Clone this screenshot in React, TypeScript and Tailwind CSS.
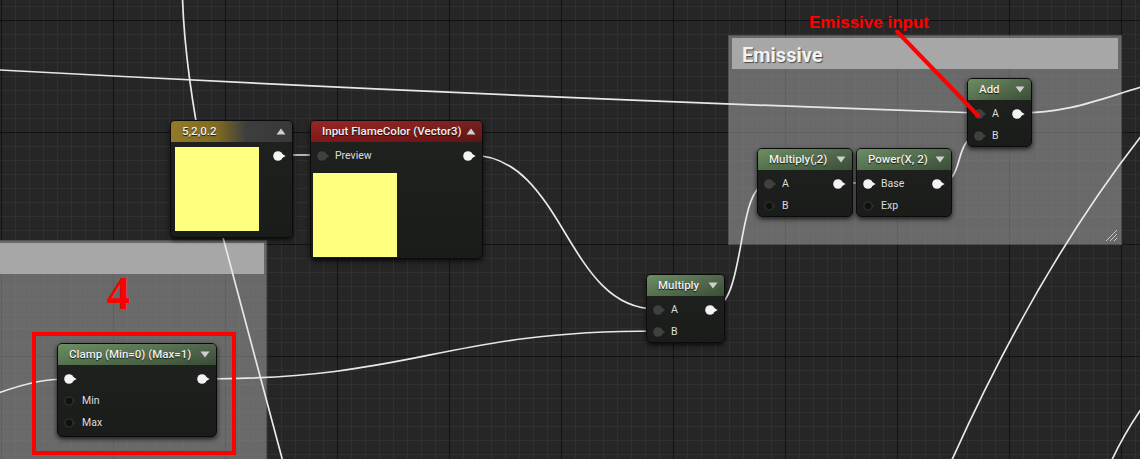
import React from 'react';

type PinKind = 'white' | 'gray' | 'hollow';

function Pin({ kind }: { kind: PinKind }) {
  if (kind === 'white') {
    return (
      <svg width="14" height="10" viewBox="0 0 14 10" className="block shrink-0">
        <circle cx="5" cy="5" r="4.8" fill="#f3f3f3" />
        <path d="M8 2.3 L12.6 5 L8 7.7 Z" fill="#f3f3f3" />
      </svg>
    );
  }
  if (kind === 'gray') {
    return (
      <svg width="14" height="10" viewBox="0 0 14 10" className="block shrink-0">
        <circle cx="5" cy="5" r="4.8" fill="#3f403f" />
        <path d="M8 2.3 L12.2 5 L8 7.7 Z" fill="#3f403f" />
      </svg>
    );
  }
  return (
    <svg width="14" height="10" viewBox="0 0 14 10" className="block shrink-0">
      <circle cx="5" cy="5" r="4.1" fill="#0f100f" stroke="#2e2f2e" strokeWidth="1.4" />
      <path d="M9 3.2 L11.8 5 L9 6.8 Z" fill="#2e2f2e" />
    </svg>
  );
}

function Tri({ up }: { up?: boolean }) {
  return (
    <svg width="10" height="7" viewBox="0 0 10 7" className="block shrink-0">
      {up ? <path d="M0.5 6.5 L5 0.5 L9.5 6.5 Z" fill="#cfcfcf" /> : <path d="M0.5 0.5 L9.5 0.5 L5 6.5 Z" fill="#cfcfcf" />}
    </svg>
  );
}

const GREEN =
  'bg-[linear-gradient(to_bottom,rgba(255,255,255,0.07),rgba(0,0,0,0.14)),linear-gradient(to_right,#628559,#4f6b49_65%,#445a40)]';
const GOLD = 'bg-[linear-gradient(to_right,#927a27,#806a23_38%,#3e3e3e_62%,#383838)]';
const RED = 'bg-[linear-gradient(to_bottom,rgba(255,255,255,0.05),rgba(0,0,0,0.12)),linear-gradient(to_right,#931b1b,#821818_60%,#6d1616)]';

function Node({
  className,
  title,
  header,
  up,
  children,
}: {
  className: string;
  title: string;
  header: string;
  up?: boolean;
  children?: React.ReactNode;
}) {
  return (
    <div
      className={`absolute flex flex-col overflow-hidden rounded-[5px] border border-[#0b0b0b] bg-[linear-gradient(to_bottom,#202220,#1a1c1a)] shadow-[0_2px_5px_rgba(0,0,0,0.75)] ${className}`}
    >
      <div className={`flex h-[21px] shrink-0 items-center justify-between pl-[11px] pr-[6px] ${header}`}>
        <span className="whitespace-nowrap font-['Roboto',sans-serif] text-[11.5px] font-medium leading-none text-[#f0f0f0] [text-shadow:0_1px_1px_rgba(0,0,0,0.8)]">
          {title}
        </span>
        <Tri up={up} />
      </div>
      {children}
    </div>
  );
}

function Row({ inKind, label, outKind }: { inKind?: PinKind; label?: string; outKind?: PinKind }) {
  return (
    <div className="flex h-[22px] items-center justify-between pl-[6px] pr-[5px]">
      <div className="flex items-center gap-[4px]">
        {inKind && <Pin kind={inKind} />}
        {label && (
          <span className="font-['Roboto',sans-serif] text-[10.5px] leading-none text-[#dcdcdc]">{label}</span>
        )}
      </div>
      {outKind && <Pin kind={outKind} />}
    </div>
  );
}

export default function App() {
  return (
    <div className="relative h-[459px] w-[1140px] overflow-hidden bg-[#262626] bg-[linear-gradient(to_right,#121212_1px,transparent_1px),linear-gradient(to_bottom,#121212_1px,transparent_1px),linear-gradient(to_right,#303030_1px,transparent_1px),linear-gradient(to_bottom,#303030_1px,transparent_1px)] [background-position:1px_20px] [background-size:112px_112px,112px_112px,14px_14px,14px_14px]">
      {/* comment: Emissive */}
      <div className="absolute left-[728px] top-[35px] h-[210px] w-[394px] border border-[rgba(60,60,60,0.5)] bg-[rgba(160,160,160,0.55)] px-[3px] pt-[2px]">
        <div className="flex h-[31px] items-center bg-[#a7a7a7] pl-[10px] pt-[2px]">
          <span className="font-['Roboto',sans-serif] text-[20px] font-bold leading-none text-[#f2f2f2] [text-shadow:1px_1px_1px_rgba(0,0,0,0.55)]">
            Emissive
          </span>
        </div>
        <svg width="13" height="12" viewBox="0 0 13 12" className="absolute bottom-[2px] right-[3px]">
          <path d="M1 11 L12 0 M5 11 L12 4 M9 11 L12 8" stroke="#c8c8c8" strokeWidth="1" />
        </svg>
      </div>

      {/* comment: 4 */}
      <div className="absolute left-[-10px] top-[240px] h-[230px] w-[277px] border border-[rgba(60,60,60,0.5)] bg-[rgba(160,160,160,0.55)] pl-[3px] pr-[2px] pt-[2px]">
        <div className="h-[31px] bg-[#a7a7a7]" />
      </div>

      {/* wires */}
      <svg width="1140" height="459" className="absolute left-0 top-0" fill="none" stroke="#e8e8e8" strokeWidth="1.7">
        <path d="M-4 69.8 Q 488 96.4 978 113" />
        <path d="M182.5 -2 C 184 45, 190 95, 205 170 L 283 462" />
        <path d="M280 155 L 322 155" />
        <path d="M470 155 C 565 155, 565 309, 656 309" />
        <path d="M202 379 C 420 379, 440 331, 656 331" />
        <path d="M-5 394 C 30 382, 45 379, 68 379" />
        <path d="M710 309 C 748 309, 734 183, 769 183" />
        <path d="M839 183 L 869 183" />
        <path d="M938 183 C 968 183, 950 135, 983 135" />
        <path d="M1018 113 C 1070 113, 1100 99, 1145 86" />
        <path d="M951 462 C 990 375, 1055 245, 1146 130" />
        <path d="M1111 462 Q 1124 433 1146 402" />
      </svg>

      {/* nodes */}
      <Node className="left-[170px] top-[120px] h-[118px] w-[123px]" title="5,2,0.2" header={GOLD} up>
        <div className="flex flex-1">
          <div className="ml-[4px] mt-[5px] h-[84px] w-[84px] bg-[#ffff80]" />
          <div className="flex-1 pt-[3px]">
            <Row outKind="white" />
          </div>
        </div>
      </Node>

      <Node className="left-[310px] top-[120px] h-[139px] w-[173px]" title="Input FlameColor (Vector3)" header={RED} up>
        <div className="pt-[3px]">
          <Row inKind="gray" label="Preview" outKind="white" />
        </div>
        <div className="ml-[2px] mt-[6px] h-[84px] w-[84px] bg-[#ffff80]" />
      </Node>

      <Node className="left-[646px] top-[274px] h-[69px] w-[79px]" title="Multiply" header={GREEN}>
        <div className="pt-[3px]">
          <Row inKind="gray" label="A" outKind="white" />
          <Row inKind="gray" label="B" />
        </div>
      </Node>

      <Node className="left-[757px] top-[148px] h-[69px] w-[96px]" title="Multiply(,2)" header={GREEN}>
        <div className="pt-[3px]">
          <Row inKind="gray" label="A" outKind="white" />
          <Row inKind="hollow" label="B" />
        </div>
      </Node>

      <Node className="left-[856px] top-[148px] h-[69px] w-[96px]" title="Power(X, 2)" header={GREEN}>
        <div className="pt-[3px]">
          <Row inKind="white" label="Base" outKind="white" />
          <Row inKind="hollow" label="Exp" />
        </div>
      </Node>

      <Node className="left-[967px] top-[78px] h-[69px] w-[65px]" title="Add" header={GREEN}>
        <div className="pt-[3px]">
          <Row inKind="gray" label="A" outKind="white" />
          <Row inKind="gray" label="B" />
        </div>
      </Node>

      <Node className="left-[57px] top-[343px] h-[94px] w-[160px]" title="Clamp (Min=0) (Max=1)" header={GREEN}>
        <div className="pt-[3px]">
          <Row inKind="white" outKind="white" />
          <Row inKind="hollow" label="Min" />
          <Row inKind="hollow" label="Max" />
        </div>
      </Node>

      {/* annotations */}
      <div className="absolute left-[107px] top-[271px] font-['Liberation_Serif',serif] text-[46px] font-bold leading-none text-[#ff0000]">
        4
      </div>
      <div className="absolute left-[32px] top-[332px] h-[123px] w-[204px] border-[4px] border-[#ff0000]" />
      <div className="absolute left-[809px] top-[14px] whitespace-nowrap font-['Liberation_Sans',sans-serif] text-[17px] font-bold leading-none text-[#ff0000]">
        Emissive input
      </div>
      <svg width="1140" height="459" className="pointer-events-none absolute left-0 top-0">
        <path d="M897 31.5 L 978 115.5" stroke="#ff0000" strokeWidth="4" strokeLinecap="round" />
      </svg>
    </div>
  );
}
